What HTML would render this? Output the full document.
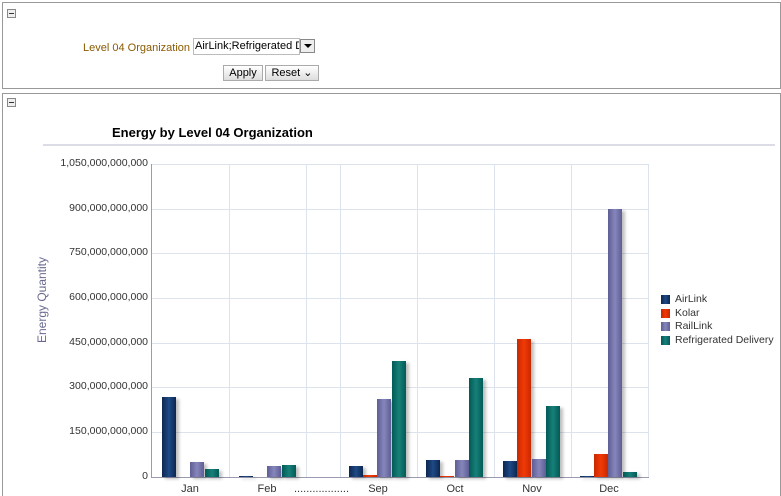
<!DOCTYPE html><html style="height:496px;overflow:hidden"><head><style>
body{margin:0;width:781px;height:496px;overflow:hidden;background:#fff;font-family:"Liberation Sans",sans-serif;position:relative}
.a{position:absolute}
.box{position:absolute;border:1px solid #999}
.col{position:absolute;width:7px;height:7px;border:1px solid #888;background:#eee}
.col:after{content:"";position:absolute;left:1px;top:3px;width:5px;height:1px;background:#333}
.btn{position:absolute;top:65px;height:14px;border:1px solid #aaa;background:linear-gradient(#fff,#ddd);font-size:11px;line-height:14px;text-align:center}
.hl{position:absolute;left:152px;width:496px;height:1px;background:#dde3ec}
.vl{position:absolute;top:164px;height:313px;width:1px;background:#dde3ec}
.yl{position:absolute;left:40px;width:108px;text-align:right;font-size:10.5px;color:#333}
.xl{position:absolute;top:483px;font-size:11px;color:#333;width:60px;text-align:center}
.b{position:absolute;width:14px;box-shadow:3px 2px 3px rgba(0,0,0,.25)}
.A{background:linear-gradient(90deg,#0d2650,#1e4a86 50%,#0d2650)}
.K{background:linear-gradient(90deg,#c82800,#f03a06 50%,#c82800)}
.R{background:linear-gradient(90deg,#5d5e95,#8686bb 50%,#5d5e95)}
.F{background:linear-gradient(90deg,#035a55,#168079 50%,#035a55)}
.lg{position:absolute;left:661px;width:9px;height:9px}
.lt{position:absolute;left:675px;font-size:10.5px;color:#333}
</style></head><body>
<div class="box" style="left:2px;top:2px;width:777px;height:85px"></div>
<div class="col" style="left:7px;top:9px"></div>
<div class="a" style="left:83px;top:42px;font-size:11px;color:#8a5a00">Level 04 Organization</div>
<div class="a" style="left:193px;top:38px;width:104px;height:15px;border:1px solid #bbb;font-size:11px;line-height:15px;overflow:hidden;white-space:nowrap;padding-left:1px">AirLink;Refrigerated Delivery</div>
<div class="a" style="left:300px;top:39px;width:13px;height:12px;border:1px solid #888;background:#eee"><div class="a" style="left:3px;top:4px;border-left:4px solid transparent;border-right:4px solid transparent;border-top:4px solid #000"></div></div>
<div class="btn" style="left:223px;width:38px">Apply</div>
<div class="btn" style="left:265px;width:52px">Reset ⌄</div>
<div class="box" style="left:2px;top:93px;width:777px;height:403px;border-bottom:none"></div>
<div class="col" style="left:7px;top:98px"></div>
<div class="a" style="left:112px;top:125px;font-size:13px;font-weight:bold;color:#000">Energy by Level 04 Organization</div>
<div class="a" style="left:43px;top:144px;width:732px;height:2px;background:#dcdce6"></div>
<div class="hl" style="top:164px"></div><div class="hl" style="top:209px"></div><div class="hl" style="top:253px"></div><div class="hl" style="top:298px"></div><div class="hl" style="top:343px"></div><div class="hl" style="top:387px"></div><div class="hl" style="top:432px"></div>
<div class="vl" style="left:229px"></div><div class="vl" style="left:306px"></div><div class="vl" style="left:340px"></div><div class="vl" style="left:417px"></div><div class="vl" style="left:494px"></div><div class="vl" style="left:571px"></div><div class="vl" style="left:648px"></div>
<div class="a" style="left:151px;top:164px;width:1px;height:314px;background:#9a9ab0"></div>
<div class="a" style="left:151px;top:477px;width:498px;height:1px;background:#9a9ab0"></div>
<div class="yl" style="top:157px">1,050,000,000,000</div>
<div class="yl" style="top:202px">900,000,000,000</div>
<div class="yl" style="top:246px">750,000,000,000</div>
<div class="yl" style="top:291px">600,000,000,000</div>
<div class="yl" style="top:336px">450,000,000,000</div>
<div class="yl" style="top:380px">300,000,000,000</div>
<div class="yl" style="top:425px">150,000,000,000</div>
<div class="yl" style="top:470px">0</div>
<div class="a" style="left:-13px;top:293px;width:110px;text-align:center;transform:rotate(-90deg);font-size:12px;color:#6a6a90">Energy Quantity</div>
<div class="xl" style="left:160px">Jan</div><div class="xl" style="left:237px">Feb</div><div class="xl" style="left:348px">Sep</div><div class="xl" style="left:425px">Oct</div><div class="xl" style="left:502px">Nov</div><div class="xl" style="left:579px">Dec</div>
<div class="a" style="left:294px;top:483px;font-size:11px;color:#333">..................</div>
<div class="b A" style="left:162px;top:397px;height:80px"></div>
<div class="b R" style="left:190px;top:462px;height:15px"></div>
<div class="b F" style="left:205px;top:469px;height:8px"></div>
<div class="b A" style="left:239px;top:476px;height:1px"></div>
<div class="b R" style="left:267px;top:466px;height:11px"></div>
<div class="b F" style="left:282px;top:465px;height:12px"></div>
<div class="b A" style="left:349px;top:466px;height:11px"></div>
<div class="b K" style="left:363px;top:475px;height:2px"></div>
<div class="b R" style="left:377px;top:399px;height:78px"></div>
<div class="b F" style="left:392px;top:361px;height:116px"></div>
<div class="b A" style="left:426px;top:460px;height:17px"></div>
<div class="b K" style="left:440px;top:476px;height:1px"></div>
<div class="b R" style="left:455px;top:460px;height:17px"></div>
<div class="b F" style="left:469px;top:378px;height:99px"></div>
<div class="b A" style="left:503px;top:461px;height:16px"></div>
<div class="b K" style="left:517px;top:339px;height:138px"></div>
<div class="b R" style="left:532px;top:459px;height:18px"></div>
<div class="b F" style="left:546px;top:406px;height:71px"></div>
<div class="b A" style="left:580px;top:476px;height:1px"></div>
<div class="b K" style="left:594px;top:454px;height:23px"></div>
<div class="b R" style="left:608px;top:209px;height:268px"></div>
<div class="b F" style="left:623px;top:472px;height:5px"></div>
<div class="lg A" style="top:295px"></div><div class="lt" style="top:293px">AirLink</div>
<div class="lg K" style="top:309px"></div><div class="lt" style="top:307px">Kolar</div>
<div class="lg R" style="top:322px"></div><div class="lt" style="top:320px">RailLink</div>
<div class="lg F" style="top:336px"></div><div class="lt" style="top:334px">Refrigerated Delivery</div>
</body></html>
